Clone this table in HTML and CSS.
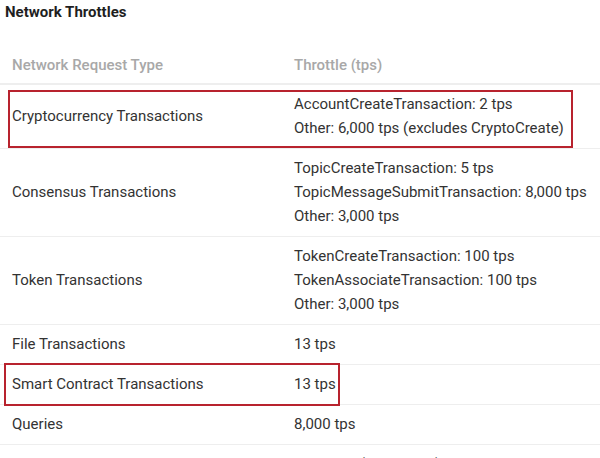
FILE: index.html
```html
<!DOCTYPE html>
<html>
<head>
<meta charset="utf-8">
<link rel="stylesheet" href="styles.css">
</head>
<body>
<div class="page">
  <h3 class="title">Network Throttles</h3>
  <table class="throttles">
    <thead>
      <tr><th class="col-type">Network Request Type</th><th>Throttle (tps)</th></tr>
    </thead>
    <tbody>
      <tr>
        <td>Cryptocurrency Transactions</td>
        <td>AccountCreateTransaction: 2 tps<br>Other: 6,000 tps (excludes CryptoCreate)</td>
      </tr>
      <tr>
        <td>Consensus Transactions</td>
        <td>TopicCreateTransaction: 5 tps<br>TopicMessageSubmitTransaction: 8,000 tps<br>Other: 3,000 tps</td>
      </tr>
      <tr>
        <td>Token Transactions</td>
        <td>TokenCreateTransaction: 100 tps<br>TokenAssociateTransaction: 100 tps<br>Other: 3,000 tps</td>
      </tr>
      <tr>
        <td>File Transactions</td>
        <td>13 tps</td>
      </tr>
      <tr>
        <td>Smart Contract Transactions</td>
        <td>13 tps</td>
      </tr>
      <tr>
        <td>Queries</td>
        <td>8,000 tps</td>
      </tr>
      <tr>
        <td>Receipts</td>
        <td>unlimited (free to ask)</td>
      </tr>
    </tbody>
  </table>
  <div class="mark mark-crypto"></div>
  <div class="mark mark-smart"></div>
</div>
</body>
</html>
```
FILE: styles.css
```css
html, body {
  margin: 0;
  padding: 0;
  background: #ffffff;
}
body {
  font-family: Roboto, "Liberation Sans", sans-serif;
  color: #333333;
  overflow: hidden;
}
.page {
  position: relative;
  width: 600px;
  height: 458px;
  overflow: hidden;
}
.title {
  margin: 0;
  padding: 2px 5px 0;
  font-size: 15px;
  line-height: 20px;
  font-weight: 700;
  color: #1f1f1f;
}
.throttles {
  margin-top: 23px;
  width: 640px;
  border-collapse: collapse;
  font-size: 15px;
  line-height: 24px;
}
.throttles th {
  text-align: left;
  font-weight: 500;
  color: #a8a8a8;
  padding: 8px 12px 6px;
  border-bottom: 2px solid #eeeeee;
}
.throttles .col-type {
  width: 258px;
}
.throttles td {
  padding: 7px 12px 8px;
  vertical-align: middle;
  border-bottom: 1px solid #eeeeee;
  color: #333333;
  white-space: nowrap;
}
.mark {
  position: absolute;
  border: 2px solid #b8232e;
  box-sizing: border-box;
}
.mark-crypto {
  left: 8px;
  top: 90px;
  width: 565px;
  height: 58px;
}
.mark-smart {
  left: 4px;
  top: 363px;
  width: 336px;
  height: 43px;
}
```
